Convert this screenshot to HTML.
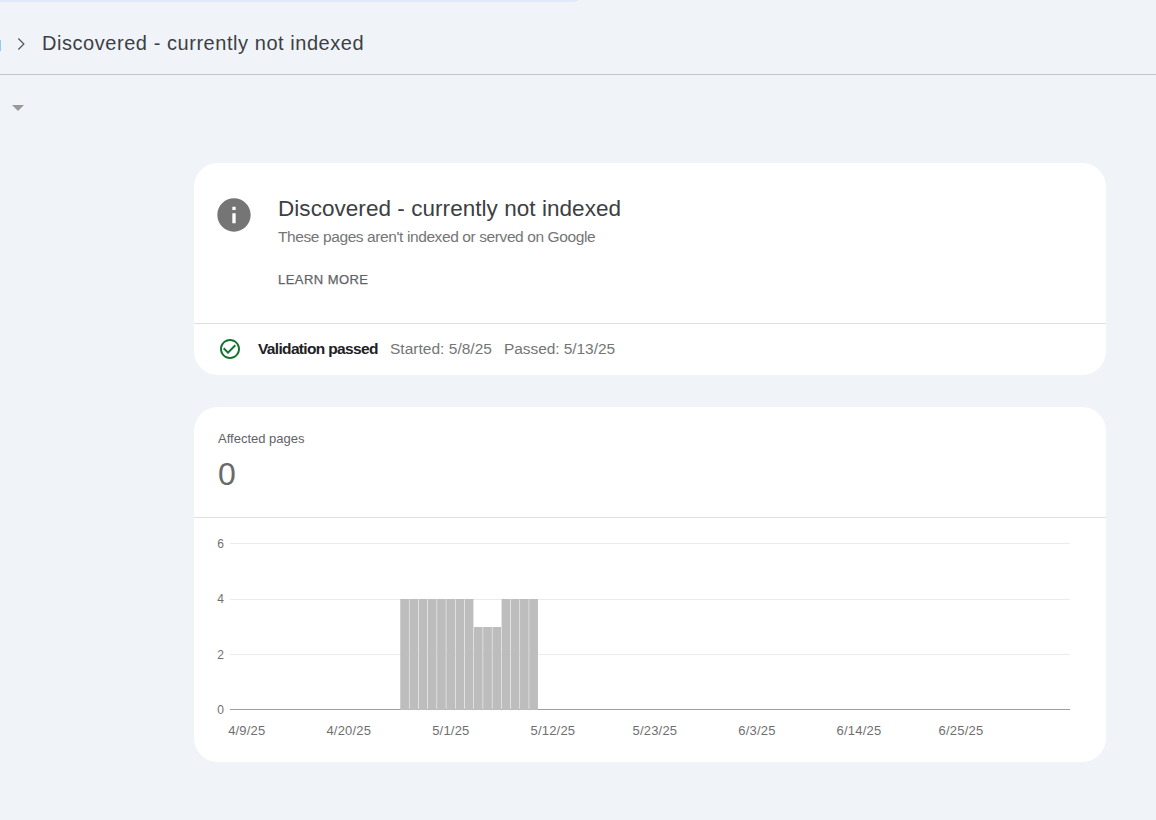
<!DOCTYPE html>
<html>
<head>
<meta charset="utf-8">
<style>
html,body{margin:0;padding:0;}
body{width:1156px;height:820px;overflow:hidden;background:#f0f4f9;position:relative;font-family:"Liberation Sans",sans-serif;}
.a{position:absolute;}
.t{position:absolute;white-space:nowrap;line-height:1;}
.topbar{left:0;top:-20px;width:580px;height:22px;background:#e0eafb;border-bottom-right-radius:6px;}
.hdiv{left:0;top:74px;width:1156px;height:1px;background:#c4c7c5;}
.card{background:#fff;border-radius:24px;left:194px;width:912px;}
</style>
</head>
<body>
<div class="a topbar"></div>
<div class="a" style="left:0;top:40px;width:1px;height:11px;background:#8fcdf5;"></div>
<svg class="a" style="left:9px;top:32px" width="24" height="24" viewBox="0 0 24 24"><path d="M9.4 6.5 L14.9 12 L9.4 17.5" fill="none" stroke="#4f5357" stroke-width="1.15"/></svg>
<div class="t" style="left:42px;top:33px;font-size:20px;color:#3c4043;letter-spacing:0.55px;">Discovered - currently not indexed</div>
<div class="a hdiv"></div>
<svg class="a" style="left:0;top:95px" width="40" height="30" viewBox="0 0 40 30"><path d="M12 10 L24 10 L18 16 Z" fill="#999999"/></svg>

<div class="a card" style="top:163px;height:212px;"></div>
<svg class="a" style="left:214px;top:195px" width="40" height="40" viewBox="0 0 24 24"><path d="M12 2C6.48 2 2 6.48 2 12s4.48 10 10 10 10-4.48 10-10S17.52 2 12 2zm1 15h-2v-6h2v6zm0-8h-2V7h2v2z" fill="#757575"/></svg>
<div class="t" style="left:278px;top:197.5px;font-size:22.5px;color:#3c4043;letter-spacing:0.05px;">Discovered - currently not indexed</div>
<div class="t" style="left:278px;top:229px;font-size:15.5px;color:#757575;letter-spacing:-0.4px;">These pages aren't indexed or served on Google</div>
<div class="t" style="left:278px;top:273px;font-size:13px;color:#5f6368;letter-spacing:0.45px;-webkit-text-stroke:0.25px #5f6368;">LEARN MORE</div>
<div class="a" style="left:194px;top:323px;width:912px;height:1px;background:#e0e0e0;"></div>
<svg class="a" style="left:218px;top:337px" width="24" height="24" viewBox="0 0 24 24"><path d="M16.59 7.58L10 14.17l-3.59-3.58L5 12l5 5 8-8zM12 2C6.48 2 2 6.48 2 12s4.48 10 10 10 10-4.48 10-10S17.52 2 12 2zm0 18c-4.42 0-8-3.58-8-8s3.58-8 8-8 8 3.58 8 8-3.58 8-8 8z" fill="#137333"/></svg>
<div class="t" style="left:258px;top:340.5px;font-size:15.5px;font-weight:bold;color:#202124;letter-spacing:-0.66px;">Validation passed</div>
<div class="t" style="left:390px;top:340.5px;font-size:15.5px;color:#757575;letter-spacing:0.02px;">Started: 5/8/25</div>
<div class="t" style="left:504px;top:340.5px;font-size:15.5px;color:#757575;letter-spacing:-0.07px;">Passed: 5/13/25</div>

<div class="a card" style="top:407px;height:355px;"></div>
<div class="t" style="left:218px;top:431.5px;font-size:13px;color:#5f6368;">Affected pages</div>
<div class="t" style="left:218px;top:457.5px;font-size:32px;color:#6a6a6a;">0</div>
<div class="a" style="left:194px;top:517px;width:912px;height:1px;background:#e0e0e0;"></div>
<svg class="a" style="left:0;top:0" width="1156" height="820">
<rect x="230" y="543" width="840" height="1" fill="#ebebeb"/>
<rect x="230" y="599" width="840" height="1" fill="#ebebeb"/>
<rect x="230" y="654" width="840" height="1" fill="#ebebeb"/>
<rect x="230" y="709" width="840" height="1" fill="#9e9e9e"/>
<rect x="400.25" y="599" width="8.71" height="111" fill="#bdbdbd"/>
<rect x="409.46" y="599" width="8.71" height="111" fill="#bdbdbd"/>
<rect x="418.68" y="599" width="8.71" height="111" fill="#bdbdbd"/>
<rect x="427.89" y="599" width="8.71" height="111" fill="#bdbdbd"/>
<rect x="437.10" y="599" width="8.71" height="111" fill="#bdbdbd"/>
<rect x="446.32" y="599" width="8.71" height="111" fill="#bdbdbd"/>
<rect x="455.53" y="599" width="8.71" height="111" fill="#bdbdbd"/>
<rect x="464.74" y="599" width="8.71" height="111" fill="#bdbdbd"/>
<rect x="473.95" y="627" width="8.71" height="83" fill="#bdbdbd"/>
<rect x="483.17" y="627" width="8.71" height="83" fill="#bdbdbd"/>
<rect x="492.38" y="627" width="8.71" height="83" fill="#bdbdbd"/>
<rect x="501.59" y="599" width="8.71" height="111" fill="#bdbdbd"/>
<rect x="510.81" y="599" width="8.71" height="111" fill="#bdbdbd"/>
<rect x="520.02" y="599" width="8.71" height="111" fill="#bdbdbd"/>
<rect x="529.23" y="599" width="8.71" height="111" fill="#bdbdbd"/>
</svg>
<div class="t" style="left:204px;width:20px;text-align:right;top:538px;font-size:12px;color:#6f6f6f;">6</div>
<div class="t" style="left:204px;width:20px;text-align:right;top:593px;font-size:12px;color:#6f6f6f;">4</div>
<div class="t" style="left:204px;width:20px;text-align:right;top:649px;font-size:12px;color:#6f6f6f;">2</div>
<div class="t" style="left:204px;width:20px;text-align:right;top:704px;font-size:12px;color:#6f6f6f;">0</div>
<div class="t" style="left:206.80px;width:80px;text-align:center;top:724px;font-size:13px;color:#6f6f6f;letter-spacing:0.2px;">4/9/25</div>
<div class="t" style="left:308.83px;width:80px;text-align:center;top:724px;font-size:13px;color:#6f6f6f;letter-spacing:0.2px;">4/20/25</div>
<div class="t" style="left:410.86px;width:80px;text-align:center;top:724px;font-size:13px;color:#6f6f6f;letter-spacing:0.2px;">5/1/25</div>
<div class="t" style="left:512.89px;width:80px;text-align:center;top:724px;font-size:13px;color:#6f6f6f;letter-spacing:0.2px;">5/12/25</div>
<div class="t" style="left:614.92px;width:80px;text-align:center;top:724px;font-size:13px;color:#6f6f6f;letter-spacing:0.2px;">5/23/25</div>
<div class="t" style="left:716.95px;width:80px;text-align:center;top:724px;font-size:13px;color:#6f6f6f;letter-spacing:0.2px;">6/3/25</div>
<div class="t" style="left:818.98px;width:80px;text-align:center;top:724px;font-size:13px;color:#6f6f6f;letter-spacing:0.2px;">6/14/25</div>
<div class="t" style="left:921.01px;width:80px;text-align:center;top:724px;font-size:13px;color:#6f6f6f;letter-spacing:0.2px;">6/25/25</div>
</body>
</html>
